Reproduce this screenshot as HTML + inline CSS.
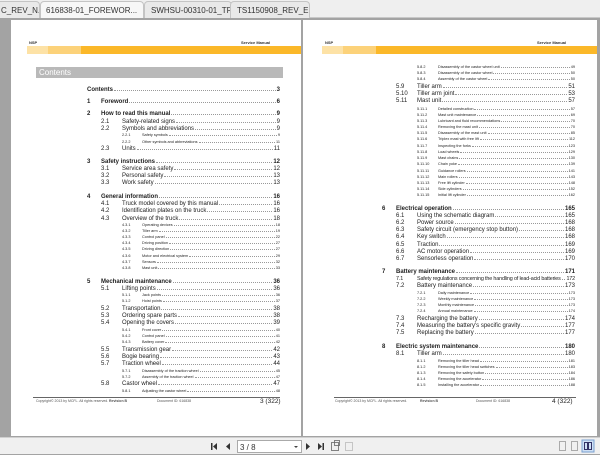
<!DOCTYPE html>
<html><head><meta charset="utf-8"><style>
*{margin:0;padding:0;box-sizing:border-box}
body{width:600px;height:454px;overflow:hidden;background:#a3a3a3;font-family:"Liberation Sans",sans-serif;position:relative}
.tabs{position:absolute;left:0;top:0;width:600px;height:18px;background:#efefef;border-bottom:1px solid #c8c8c8}
.tab{position:absolute;top:1px;height:17px;font-size:8px;color:#333;padding:4px 0 0 6px;border:1px solid #c4c4c4;border-bottom:none;border-radius:4px 4px 0 0;background:#e9e9e9;white-space:nowrap;overflow:hidden}
.tab.a{background:#f7f7f7}
.page{position:absolute;top:20px;height:416px;background:#fff}
.ab{position:absolute}
.hdr{font-size:4px;font-weight:bold;color:#333}
.bar{position:absolute;top:46px;height:8px;background:#fbb829}
.r{position:absolute;display:flex;align-items:flex-end;color:#222;white-space:nowrap}
.r .n{display:inline-block}
.r .d{flex:1;border-bottom:1px dotted #999;margin:0 1px 2px 1px}
.l1{font-size:6px;font-weight:bold;height:8px}
.l2{font-size:6px;height:8px}
.l3{font-size:3.8px;height:5px}
.l3 .d{margin-bottom:1px}
.foot{position:absolute;top:399px;font-size:3.5px;color:#555}
.tb{position:absolute;left:0;top:437px;width:600px;height:17px;background:#f0f0f0;border-top:1px solid #d0d0d0}
</style></head><body>
<div class="tabs">
<div class="tab" style="left:-6px;width:46px">C_REV_N....</div>
<div class="tab a" style="left:40px;width:104px;padding-left:5px">616838-01_FOREWOR... &nbsp;&nbsp;x</div>
<div class="tab" style="left:144px;width:88px">SWHSU-00310-01_TR...</div>
<div class="tab" style="left:230px;width:80px">TS1150908_REV_E.pdf</div>
</div>

<div class="page" style="left:11px;width:290px"></div>
<div class="page" style="left:303px;width:294px"></div>

<div class="ab hdr" style="left:29px;top:40px">NSP</div>
<div class="ab hdr" style="left:241px;top:40px">Service Manual</div>
<div class="bar" style="left:27px;width:274px"></div>
<div class="bar" style="left:27px;width:21px;background:#fde2a6"></div>
<div class="bar" style="left:48px;width:33px;background:#fcd27a"></div>
<div class="ab" style="left:36px;top:67px;width:247px;height:11px;background:#b9b9b9;color:#fff;font-size:8px;padding:1px 0 0 3px">Contents</div>

<div class="ab hdr" style="left:325px;top:40px">NSP</div>
<div class="ab hdr" style="left:537px;top:40px">Service Manual</div>
<div class="bar" style="left:322px;width:275px"></div>
<div class="bar" style="left:322px;width:21px;background:#fde2a6"></div>
<div class="bar" style="left:343px;width:33px;background:#fcd27a"></div>

<div class="r l1" style="left:87px;width:193px;top:85px"><span class="n">Contents</span><span class="d"></span>3</div>
<div class="r l1" style="left:87px;width:193px;top:97px"><span class="n" style="width:14px">1</span>Foreword<span class="d"></span>6</div>
<div class="r l1" style="left:87px;width:193px;top:109px"><span class="n" style="width:14px">2</span>How to read this manual<span class="d"></span>9</div>
<div class="r l2" style="left:101px;width:179px;top:117px"><span class="n" style="width:21px">2.1</span>Safety-related signs<span class="d"></span>9</div>
<div class="r l2" style="left:101px;width:179px;top:124px"><span class="n" style="width:21px">2.2</span>Symbols and abbreviations<span class="d"></span>9</div>
<div class="r l3" style="left:122px;width:158px;top:132px"><span class="n" style="width:20px">2.2.1</span>Safety symbols<span class="d"></span>9</div>
<div class="r l3" style="left:122px;width:158px;top:139px"><span class="n" style="width:20px">2.2.2</span>Other symbols and abbreviations<span class="d"></span>11</div>
<div class="r l2" style="left:101px;width:179px;top:144px"><span class="n" style="width:21px">2.3</span>Units<span class="d"></span>11</div>
<div class="r l1" style="left:87px;width:193px;top:157px"><span class="n" style="width:14px">3</span>Safety instructions<span class="d"></span>12</div>
<div class="r l2" style="left:101px;width:179px;top:164px"><span class="n" style="width:21px">3.1</span>Service area safety<span class="d"></span>12</div>
<div class="r l2" style="left:101px;width:179px;top:171px"><span class="n" style="width:21px">3.2</span>Personal safety<span class="d"></span>13</div>
<div class="r l2" style="left:101px;width:179px;top:178px"><span class="n" style="width:21px">3.3</span>Work safety<span class="d"></span>13</div>
<div class="r l1" style="left:87px;width:193px;top:192px"><span class="n" style="width:14px">4</span>General information<span class="d"></span>16</div>
<div class="r l2" style="left:101px;width:179px;top:199px"><span class="n" style="width:21px">4.1</span>Truck model covered by this manual<span class="d"></span>16</div>
<div class="r l2" style="left:101px;width:179px;top:206px"><span class="n" style="width:21px">4.2</span>Identification plates on the truck<span class="d"></span>16</div>
<div class="r l2" style="left:101px;width:179px;top:214px"><span class="n" style="width:21px">4.3</span>Overview of the truck<span class="d"></span>18</div>
<div class="r l3" style="left:122px;width:158px;top:222px"><span class="n" style="width:20px">4.3.1</span>Operating devices<span class="d"></span>18</div>
<div class="r l3" style="left:122px;width:158px;top:228px"><span class="n" style="width:20px">4.3.2</span>Tiller arm<span class="d"></span>19</div>
<div class="r l3" style="left:122px;width:158px;top:234px"><span class="n" style="width:20px">4.3.3</span>Control panel<span class="d"></span>22</div>
<div class="r l3" style="left:122px;width:158px;top:240px"><span class="n" style="width:20px">4.3.4</span>Driving position<span class="d"></span>27</div>
<div class="r l3" style="left:122px;width:158px;top:246px"><span class="n" style="width:20px">4.3.5</span>Driving direction<span class="d"></span>27</div>
<div class="r l3" style="left:122px;width:158px;top:253px"><span class="n" style="width:20px">4.3.6</span>Motor and electrical system<span class="d"></span>29</div>
<div class="r l3" style="left:122px;width:158px;top:259px"><span class="n" style="width:20px">4.3.7</span>Sensors<span class="d"></span>32</div>
<div class="r l3" style="left:122px;width:158px;top:265px"><span class="n" style="width:20px">4.3.8</span>Mast unit<span class="d"></span>33</div>
<div class="r l1" style="left:87px;width:193px;top:277px"><span class="n" style="width:14px">5</span>Mechanical maintenance<span class="d"></span>36</div>
<div class="r l2" style="left:101px;width:179px;top:284px"><span class="n" style="width:21px">5.1</span>Lifting points<span class="d"></span>36</div>
<div class="r l3" style="left:122px;width:158px;top:292px"><span class="n" style="width:20px">5.1.1</span>Jack points<span class="d"></span>36</div>
<div class="r l3" style="left:122px;width:158px;top:298px"><span class="n" style="width:20px">5.1.2</span>Hoist points<span class="d"></span>37</div>
<div class="r l2" style="left:101px;width:179px;top:304px"><span class="n" style="width:21px">5.2</span>Transportation<span class="d"></span>38</div>
<div class="r l2" style="left:101px;width:179px;top:311px"><span class="n" style="width:21px">5.3</span>Ordering spare parts<span class="d"></span>38</div>
<div class="r l2" style="left:101px;width:179px;top:318px"><span class="n" style="width:21px">5.4</span>Opening the covers<span class="d"></span>39</div>
<div class="r l3" style="left:122px;width:158px;top:327px"><span class="n" style="width:20px">5.4.1</span>Front cover<span class="d"></span>40</div>
<div class="r l3" style="left:122px;width:158px;top:333px"><span class="n" style="width:20px">5.4.2</span>Control panel<span class="d"></span>41</div>
<div class="r l3" style="left:122px;width:158px;top:339px"><span class="n" style="width:20px">5.4.3</span>Battery cover<span class="d"></span>42</div>
<div class="r l2" style="left:101px;width:179px;top:345px"><span class="n" style="width:21px">5.5</span>Transmission gear<span class="d"></span>42</div>
<div class="r l2" style="left:101px;width:179px;top:352px"><span class="n" style="width:21px">5.6</span>Bogie bearing<span class="d"></span>43</div>
<div class="r l2" style="left:101px;width:179px;top:359px"><span class="n" style="width:21px">5.7</span>Traction wheel<span class="d"></span>44</div>
<div class="r l3" style="left:122px;width:158px;top:368px"><span class="n" style="width:20px">5.7.1</span>Disassembly of the traction wheel<span class="d"></span>45</div>
<div class="r l3" style="left:122px;width:158px;top:374px"><span class="n" style="width:20px">5.7.2</span>Assembly of the traction wheel<span class="d"></span>47</div>
<div class="r l2" style="left:101px;width:179px;top:379px"><span class="n" style="width:21px">5.8</span>Castor wheel<span class="d"></span>47</div>
<div class="r l3" style="left:122px;width:158px;top:388px"><span class="n" style="width:20px">5.8.1</span>Adjusting the castor wheel<span class="d"></span>48</div>
<div class="ab" style="left:33px;top:397px;width:247px;border-top:1px solid #666"></div>
<div class="foot" style="left:36px">Copyright© 2013 by MCFL. All rights reserved.</div>
<div class="foot" style="left:109px;font-weight:bold">Revision B</div>
<div class="foot" style="left:157px">Document ID: 616838</div>
<div class="ab" style="left:260px;top:398px;font-size:6.5px;color:#222">3 (322)</div>

<div class="r l3" style="left:417px;width:158px;top:64px"><span class="n" style="width:21px">5.8.2</span>Disassembly of the castor wheel unit<span class="d"></span>49</div>
<div class="r l3" style="left:417px;width:158px;top:70px"><span class="n" style="width:21px">5.8.3</span>Disassembly of the castor wheel<span class="d"></span>50</div>
<div class="r l3" style="left:417px;width:158px;top:76px"><span class="n" style="width:21px">5.8.4</span>Assembly of the castor wheel<span class="d"></span>50</div>
<div class="r l2" style="left:396px;width:179px;top:82px"><span class="n" style="width:21px">5.9</span>Tiller arm<span class="d"></span>51</div>
<div class="r l2" style="left:396px;width:179px;top:89px"><span class="n" style="width:21px">5.10</span>Tiller arm joint<span class="d"></span>53</div>
<div class="r l2" style="left:396px;width:179px;top:96px"><span class="n" style="width:21px">5.11</span>Mast unit<span class="d"></span>57</div>
<div class="r l3" style="left:417px;width:158px;top:106px"><span class="n" style="width:21px">5.11.1</span>Detailed construction<span class="d"></span>57</div>
<div class="r l3" style="left:417px;width:158px;top:112px"><span class="n" style="width:21px">5.11.2</span>Mast unit maintenance<span class="d"></span>69</div>
<div class="r l3" style="left:417px;width:158px;top:118px"><span class="n" style="width:21px">5.11.3</span>Lubricant and fluid recommendations<span class="d"></span>70</div>
<div class="r l3" style="left:417px;width:158px;top:124px"><span class="n" style="width:21px">5.11.4</span>Removing the mast unit<span class="d"></span>70</div>
<div class="r l3" style="left:417px;width:158px;top:130px"><span class="n" style="width:21px">5.11.5</span>Disassembly of the mast unit<span class="d"></span>85</div>
<div class="r l3" style="left:417px;width:158px;top:136px"><span class="n" style="width:21px">5.11.6</span>Triplex mast with free lift<span class="d"></span>112</div>
<div class="r l3" style="left:417px;width:158px;top:143px"><span class="n" style="width:21px">5.11.7</span>Inspecting the forks<span class="d"></span>123</div>
<div class="r l3" style="left:417px;width:158px;top:149px"><span class="n" style="width:21px">5.11.8</span>Load wheels<span class="d"></span>129</div>
<div class="r l3" style="left:417px;width:158px;top:155px"><span class="n" style="width:21px">5.11.9</span>Mast chains<span class="d"></span>130</div>
<div class="r l3" style="left:417px;width:158px;top:161px"><span class="n" style="width:21px">5.11.10</span>Chain yoke<span class="d"></span>139</div>
<div class="r l3" style="left:417px;width:158px;top:168px"><span class="n" style="width:21px">5.11.11</span>Guidance rollers<span class="d"></span>141</div>
<div class="r l3" style="left:417px;width:158px;top:174px"><span class="n" style="width:21px">5.11.12</span>Main rollers<span class="d"></span>143</div>
<div class="r l3" style="left:417px;width:158px;top:180px"><span class="n" style="width:21px">5.11.13</span>Free lift cylinder<span class="d"></span>148</div>
<div class="r l3" style="left:417px;width:158px;top:186px"><span class="n" style="width:21px">5.11.14</span>Side cylinders<span class="d"></span>152</div>
<div class="r l3" style="left:417px;width:158px;top:192px"><span class="n" style="width:21px">5.11.15</span>Initial lift cylinder<span class="d"></span>162</div>
<div class="r l1" style="left:382px;width:193px;top:204px"><span class="n" style="width:14px">6</span>Electrical operation<span class="d"></span>165</div>
<div class="r l2" style="left:396px;width:179px;top:211px"><span class="n" style="width:21px">6.1</span>Using the schematic diagram<span class="d"></span>165</div>
<div class="r l2" style="left:396px;width:179px;top:218px"><span class="n" style="width:21px">6.2</span>Power source<span class="d"></span>168</div>
<div class="r l2" style="left:396px;width:179px;top:225px"><span class="n" style="width:21px">6.3</span>Safety circuit (emergency stop button)<span class="d"></span>168</div>
<div class="r l2" style="left:396px;width:179px;top:232px"><span class="n" style="width:21px">6.4</span>Key switch<span class="d"></span>168</div>
<div class="r l2" style="left:396px;width:179px;top:240px"><span class="n" style="width:21px">6.5</span>Traction<span class="d"></span>169</div>
<div class="r l2" style="left:396px;width:179px;top:247px"><span class="n" style="width:21px">6.6</span>AC motor operation<span class="d"></span>169</div>
<div class="r l2" style="left:396px;width:179px;top:254px"><span class="n" style="width:21px">6.7</span>Sensorless operation<span class="d"></span>170</div>
<div class="r l1" style="left:382px;width:193px;top:267px"><span class="n" style="width:14px">7</span>Battery maintenance<span class="d"></span>171</div>
<div class="r l2" style="left:396px;width:179px;top:274px;font-size:5.4px;letter-spacing:-0.15px"><span class="n" style="width:21px">7.1</span>Safety regulations concerning the handling of lead-acid batteries<span class="d"></span>172</div>
<div class="r l2" style="left:396px;width:179px;top:281px"><span class="n" style="width:21px">7.2</span>Battery maintenance<span class="d"></span>173</div>
<div class="r l3" style="left:417px;width:158px;top:290px"><span class="n" style="width:21px">7.2.1</span>Daily maintenance<span class="d"></span>173</div>
<div class="r l3" style="left:417px;width:158px;top:296px"><span class="n" style="width:21px">7.2.2</span>Weekly maintenance<span class="d"></span>173</div>
<div class="r l3" style="left:417px;width:158px;top:302px"><span class="n" style="width:21px">7.2.3</span>Monthly maintenance<span class="d"></span>173</div>
<div class="r l3" style="left:417px;width:158px;top:308px"><span class="n" style="width:21px">7.2.4</span>Annual maintenance<span class="d"></span>174</div>
<div class="r l2" style="left:396px;width:179px;top:314px"><span class="n" style="width:21px">7.3</span>Recharging the battery<span class="d"></span>174</div>
<div class="r l2" style="left:396px;width:179px;top:321px"><span class="n" style="width:21px">7.4</span>Measuring the battery's specific gravity<span class="d"></span>177</div>
<div class="r l2" style="left:396px;width:179px;top:328px"><span class="n" style="width:21px">7.5</span>Replacing the battery<span class="d"></span>177</div>
<div class="r l1" style="left:382px;width:193px;top:342px"><span class="n" style="width:14px">8</span>Electric system maintenance<span class="d"></span>180</div>
<div class="r l2" style="left:396px;width:179px;top:349px"><span class="n" style="width:21px">8.1</span>Tiller arm<span class="d"></span>180</div>
<div class="r l3" style="left:417px;width:158px;top:358px"><span class="n" style="width:21px">8.1.1</span>Removing the tiller head<span class="d"></span>181</div>
<div class="r l3" style="left:417px;width:158px;top:364px"><span class="n" style="width:21px">8.1.2</span>Removing the tiller head switches<span class="d"></span>183</div>
<div class="r l3" style="left:417px;width:158px;top:370px"><span class="n" style="width:21px">8.1.3</span>Removing the safety button<span class="d"></span>184</div>
<div class="r l3" style="left:417px;width:158px;top:376px"><span class="n" style="width:21px">8.1.4</span>Removing the accelerator<span class="d"></span>186</div>
<div class="r l3" style="left:417px;width:158px;top:382px"><span class="n" style="width:21px">8.1.5</span>Installing the accelerator<span class="d"></span>188</div>
<div class="ab" style="left:334px;top:397px;width:242px;border-top:1px solid #666"></div>
<div class="foot" style="left:335px">Copyright© 2013 by MCFL. All rights reserved.</div>
<div class="foot" style="left:420px;font-weight:bold">Revision B</div>
<div class="foot" style="left:476px">Document ID: 616838</div>
<div class="ab" style="left:552px;top:398px;font-size:6.5px;color:#222">4 (322)</div>

<div class="tb">
<svg width="600" height="17" style="position:absolute;left:0;top:0">
<g fill="#333">
<rect x="211" y="5" width="1.5" height="7"/><polygon points="217,5 217,12 213,8.5"/>
<polygon points="230,5 230,12 226,8.5"/>
<polygon points="306,5 306,12 310,8.5"/>
<polygon points="318,5 318,12 322,8.5"/><rect x="322.5" y="5" width="1.5" height="7"/>
</g>
<rect x="237.5" y="2.5" width="64" height="12" fill="#fff" stroke="#aaa"/>
<text x="240" y="12" font-size="8" fill="#333" font-family="Liberation Sans">3 / 8</text>
<polygon points="294,8 298,8 296,10" fill="#444"/>
<g fill="none" stroke="#666" stroke-width="0.8">
<rect x="331.5" y="4.5" width="7" height="8"/><rect x="334.5" y="2.5" width="5" height="5"/>
<rect x="345.5" y="4.5" width="7" height="8" stroke="#bbb"/>
<rect x="559.5" y="3.5" width="6" height="9" stroke="#999"/>
<rect x="571.5" y="3.5" width="6" height="9" stroke="#999"/>
</g>
<rect x="582" y="2" width="12" height="12" fill="#cfe0f5" stroke="#7aa0d0"/>
<rect x="584.5" y="4.5" width="3" height="7" fill="none" stroke="#336"/><rect x="588.5" y="4.5" width="3" height="7" fill="none" stroke="#336"/>
</svg>
</div>
</body></html>
